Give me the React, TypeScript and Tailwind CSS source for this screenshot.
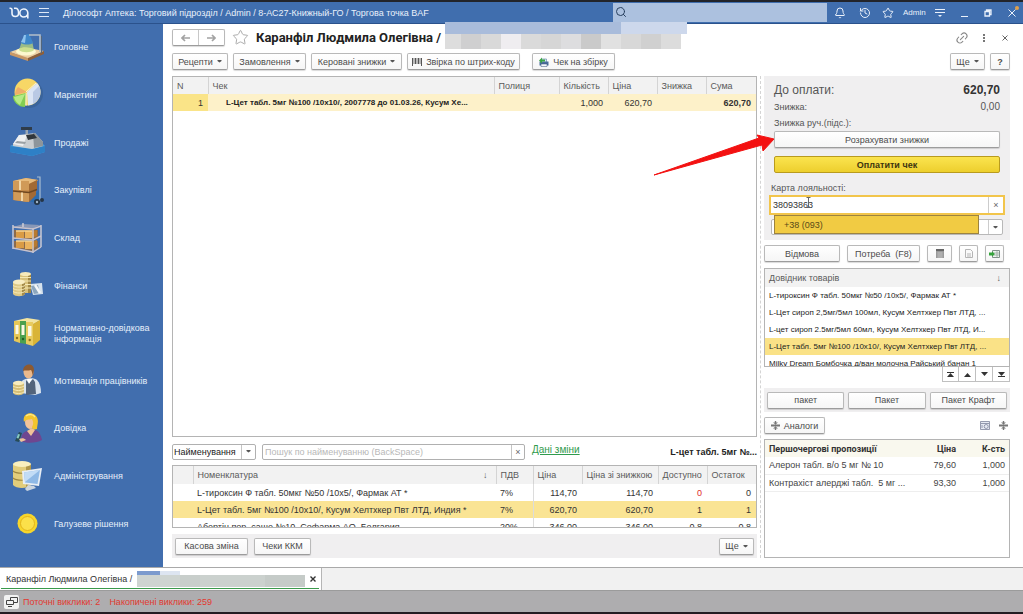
import React from "react";
import { Bell, History, Star, Search, Link2 } from "lucide-react";

const BTN =
  "flex items-center justify-center gap-1 h-[17px] rounded-[2px] border border-[#b9b9b9] border-b-[#9c9c9c] bg-linear-to-b from-white to-[#f6f6f6] shadow-[0_1px_1px_rgba(0,0,0,0.15)] text-[#4c4c4c] whitespace-nowrap";

const ROBOTO = "font-['Roboto','Liberation_Sans',sans-serif]";

function Btn({ className = "", children, label }: { className?: string; children: React.ReactNode; label?: string }) {
  return (
    <button type="button" aria-label={label} className={`${BTN} ${className}`}>
      {children}
    </button>
  );
}

function Caret() {
  return (
    <svg viewBox="0 0 5 3" className="w-[5px] h-[3px] shrink-0" fill="#555">
      <path d="M.5 0h4v1l-2 1.500-2-1.500z" />
    </svg>
  );
}

function Logo() {
  return (
    <svg viewBox="0 0 20 12" className="w-5 h-3" fill="none" stroke="#eef4fc" strokeWidth="1.600">
      <path d="M.5 1.200h.8C2.600 1.200 3 2 3 3v3.200a3.300 3.300 0 1 0 6.600 0C9.600 3 8.500 1.200 6.500 1.200H5" />
      <path d="M18.800 11.500V5.800a4 4 0 1 0-4 4.200c2 0 3.300-1 4-2.800" />
    </svg>
  );
}

const icons: Record<string, React.ReactNode> = {
  lamp: (
    <>
      <path d="M1 21 15 16l20 4-16 8z" fill="#ecd0a4" />
      <path d="M1 21v3l18 6v-3z" fill="#c99865" />
      <path d="m35 20-16 7v3l16-7z" fill="#8c5f3a" />
      <ellipse cx="17" cy="20.500" rx="10" ry="4" fill="#fdf8cf" />
      <path d="m13 10-3 9c3 3 12 3 15 0l-2-9z" fill="#b9d77a" opacity=".75" />
      <path d="m15 4 5-1 2 4 2 5c-3 2-9 2-12 0l2-5z" fill="#3f87c9" />
      <path d="m15 4 2 0-1 8-4-1 2-4z" fill="#8fc3ee" />
      <path d="M20 4h11v17" fill="none" stroke="#b3bfca" strokeWidth="1.600" />
      <path d="M32.500 5v17" stroke="#53667c" />
    </>
  ),
  pie: (
    <>
      <ellipse cx="20" cy="16" rx="14" ry="14" fill="#345987" opacity=".5" />
      <ellipse cx="18.500" cy="14" rx="13" ry="13.500" fill="#f7d766" />
      <path d="M18 14 28 5c7 8 2 21-9 22.500z" fill="#dbe5f4" />
      <path d="m24 14 6-6c4 7 0 15-6 18z" fill="#b9c9e4" />
      <path d="m18 14-12 3c0-3 1-6 3-8z" fill="#efae68" />
      <path d="M17 15 4 18c0 6 5 11 12 11z" fill="#83ce52" />
      <path d="m16 16-11 3c1 4 3 6 6 8z" fill="#b5ea86" />
      <path d="m17 14 10-9M17 15v13" stroke="#fff" strokeWidth=".7" />
    </>
  ),
  register: (
    <>
      <path d="M12 1h11v3H12z" fill="#2f3c4a" />
      <path d="M16.500 4h2.500v7h-2.500z" fill="#9aa7b4" />
      <path d="m1 20 7-3h25l3 3v6l-13 4-22-4z" fill="#4aa0e0" />
      <path d="m1 20 22 3 13-3v6l-13 4-22-4z" fill="#2e80c6" />
      <path d="m4 18 6-9 16-2 8 9v4l-11 3-19-3z" fill="#c9cdd0" />
      <path d="m4 18 6-9 8 0-4 11z" fill="#eef0f1" />
      <path d="m24 7 2 0 8 9v4l-9 2z" fill="#8d959b" />
      <path d="m17 9 8-1 3 4-9 2z" fill="#30363b" />
      <path d="m8 15 9 1-1 2-10-1z" fill="#9ba1a5" />
    </>
  ),
  boxes: (
    <>
      <path d="M20 27 30 16l1 12-4 1z" fill="#2d6cae" />
      <path d="m4 7 13-3 12 2-3 4v11l-8 7-14-2z" fill="#c48a4a" />
      <path d="m4 7 13-3 12 2-9 4z" fill="#e7bb7c" />
      <path d="M4 7h16v9l-16 0zM5 18l15 1v9L5 26z" fill="#d09a58" />
      <path d="m20 10 8-4v9l-8 3zM20 19l7-3v5l-7 7z" fill="#a26a34" />
      <path d="M4 17l16 1.500 8-3" stroke="#6f4720" fill="none" strokeWidth="1.400" />
      <path d="M11 6.500v9.500M13 18.500V27" stroke="#f2d6a6" strokeWidth="2" />
      <path d="M28 3h3v24" stroke="#a7bcd0" fill="none" strokeWidth="1.200" />
      <circle cx="28" cy="28" r="3" fill="#243547" />
      <circle cx="28" cy="28" r="1.200" fill="#9fb3c6" />
      <circle cx="33" cy="26" r="2" fill="#243547" />
    </>
  ),
  shelf: (
    <>
      <path d="m4 6 19 2 8-4-17-1z" fill="#b7b3bb" opacity=".6" />
      <path d="M5 9h24v8l-6 2-18-2zM5 20h24v8l-6 2-18-3z" fill="#8b6b4c" />
      <path d="M7 10h8v7H7zM7 20h8v7H7z" fill="#d99b45" />
      <path d="M16 10h7v7h-7zM16 20h7v8h-7z" fill="#eab35e" />
      <path d="m23 10 5-1v6l-5 2zM23 20l5-1v6l-5 3z" fill="#b87a30" />
      <path d="M7 10h16M7 20h16" stroke="#f5d393" strokeWidth="1.500" />
      <path d="M4 4v24M24 7v25M32 4v22M14 2v4" stroke="#d3d0d8" strokeWidth="1.400" fill="none" />
      <path d="m4 6 20 2 8-3M4 17l20 2 8-4M4 27l20 4 8-5" stroke="#c8c2cc" strokeWidth="1.400" fill="none" />
    </>
  ),
  coins: (
    <>
      <path d="m21 15 12-1 1 11-10 1z" fill="#d6e2ed" />
      <path d="m22 17 7-1 2 8-6 1z" fill="#8ca6bd" />
      <path d="m26 16 5 8" stroke="#f4f7f9" strokeWidth="2.500" />
      <path d="M11 5h11v19H11z" fill="#d8c17a" />
      <path d="M19 5h3v19h-3z" fill="#a18745" />
      <path d="M11 8.500h11M11 12h11M11 15.500h11M11 19h11" stroke="#f5e8b4" />
      <ellipse cx="16.500" cy="5" rx="5.500" ry="2" fill="#f7eabb" />
      <path d="M4 13h12v12c-2 3-10 3-12 0z" fill="#dfca86" />
      <path d="M13 13h3v12l-3 2z" fill="#a58b49" />
      <path d="M4 16.500c3 2 9 2 12 0M4 19.500c3 2 9 2 12 0M4 22.500c3 2 9 2 12 0" stroke="#f7ebba" fill="none" />
      <ellipse cx="10" cy="13" rx="6" ry="2.500" fill="#f8edc2" />
    </>
  ),
  binders: (
    <>
      <path d="m5 4 13-3 13 2-6 4z" fill="#f2e4a0" />
      <path d="m24 7 7-4v20l-7 6z" fill="#d9b437" />
      <path d="M5 4h6v22l-6-2z" fill="#e7c857" />
      <path d="M11 4h6v23l-6-1z" fill="#4ca04e" />
      <path d="M17 5h7v24l-7-2z" fill="#e8cb5e" />
      <path d="M6.500 8h3v9h-3zM12.500 8h3v10h-3zM19 9h3.500v10H19z" fill="#fbf8e4" />
      <circle cx="8" cy="21" r="1.200" fill="#8c7220" />
      <circle cx="14" cy="22" r="1.200" fill="#225f26" />
      <circle cx="20.700" cy="23" r="1.200" fill="#8c7220" />
    </>
  ),
  worker: (
    <>
      <path d="M13 17c2-3 12-4 15-1 3 3 4 8 4 13l-6 2-14-2z" fill="#d9e3ee" />
      <path d="m17 16 3 3 4-4 2 3 1 12-10 1z" fill="#53647b" />
      <path d="m18 15 2 5 3-5z" fill="#fff" />
      <ellipse cx="19.500" cy="8" rx="5" ry="6.500" fill="#eab98c" />
      <path d="M14 7c0-8 11-9 11-1l-1 6c-1-3-1-5-2-6-3 1-6 0-8 1z" fill="#8d5a31" />
      <path d="M4 19h11v10c-2 3-9 3-11 0z" fill="#d5be76" />
      <path d="M4 22c3 2 8 2 11 0M4 25c3 2 8 2 11 0M4 28c3 2 8 2 11 0" stroke="#f7eab5" fill="none" />
      <ellipse cx="9.500" cy="19" rx="5.500" ry="2.200" fill="#f8ecbe" />
    </>
  ),
  woman: (
    <>
      <path d="M12 29c0-6 2-9 6-10l8-1c4 1 6 5 7 10-5 3-15 4-21 1z" fill="#6e4690" />
      <path d="m18 19 4 5 4-6-3-2z" fill="#f0c298" />
      <ellipse cx="21" cy="10" rx="5" ry="7" fill="#f2c49a" />
      <path d="M15 10C13 2 21-1 26 3c5 4 2 10 2 14-3 1-5 0-5-2 2-3 1-6 0-8-3 1-6 0-8 3z" fill="#f3c52d" />
      <path d="M17 4c3-2 7-2 9 1" stroke="#ffe883" fill="none" strokeWidth="1.500" />
      <path d="m6 29 4-9 3 1-3 9z" fill="#274c57" />
      <path d="m9 22 2 .5-1.500 4-2-.5z" fill="#86c9c3" />
      <path d="M10 27c3-1 5-1 7 1l-5 2z" fill="#f0c298" />
    </>
  ),
  database: (
    <>
      <path d="M4 4v21c3 4 15 4 18 0V4z" fill="#e2cd7b" />
      <path d="M17 4h5v21l-5 2z" fill="#b0974a" />
      <path d="M4 11c3 3 15 3 18 0M4 18c3 3 15 3 18 0" stroke="#9e8741" fill="none" strokeWidth="1.200" />
      <ellipse cx="13" cy="4" rx="9" ry="3" fill="#f9efbe" />
      <path d="m13 11 20-3-3 18-16-2z" fill="#e8eef5" />
      <path d="m15 12.500 16-2.500-2.500 14-12.500-1.500z" fill="#8fb9e6" />
      <path d="m15 12.500 16-2.500-15 12z" fill="#c2dcf6" />
      <path d="m19 25 6 1 2 2-9 3-2-2z" fill="#ccd5df" />
    </>
  ),
  coin: (
    <>
      <circle cx="18.500" cy="16.500" r="10" fill="#f7d62b" />
      <circle cx="18.500" cy="16.500" r="7" fill="#fbe04a" stroke="#e2b41b" strokeWidth="1" />
    </>
  ),
};

const menu: [string, string][] = [
  ["lamp", "Головне"],
  ["pie", "Маркетинг"],
  ["register", "Продажі"],
  ["boxes", "Закупівлі"],
  ["shelf", "Склад"],
  ["coins", "Фінанси"],
  ["binders", "Нормативно-довідкова інформація"],
  ["worker", "Мотивація працівників"],
  ["woman", "Довідка"],
  ["database", "Адміністрування"],
  ["coin", "Галузеве рішення"],
];

function Header() {
  return (
    <header className="flex items-center h-[22px] bg-[#406eae] border-b border-[#2b528c] text-[#eaf1fb] pl-[9px]">
      <Logo />
      <button type="button" aria-label="Меню" className="ml-[10px] flex flex-col gap-[3px]">
        <span className="block w-[10px] h-px bg-[#dfe9f7]" />
        <span className="block w-[10px] h-px bg-[#dfe9f7]" />
        <span className="block w-[10px] h-px bg-[#dfe9f7]" />
      </button>
      <h1 className="ml-[14px] text-[9px] whitespace-nowrap">
        Ділософт Аптека: Торговий підрозділ / Admin / 8-АС27-Книжный-ГО / Торгова точка BAF
      </h1>
      <label className="ml-auto flex items-center w-[214px] h-[19px] bg-[#acc1df] pl-[2px] mb-px">
        <Search className="w-3 h-3 text-[#28405f]" strokeWidth={2} />
        <input aria-label="Пошук" className="flex-1 min-w-0 bg-transparent outline-none text-[9px] text-[#222]" />
      </label>
      <div className="flex items-center pl-[7px] w-[196px] shrink-0">
        <button type="button" aria-label="Сповіщення"><Bell className="w-3 h-3" strokeWidth={2} /></button>
        <button type="button" aria-label="Історія" className="ml-[13px]"><History className="w-3 h-3" strokeWidth={2} /></button>
        <button type="button" aria-label="Вибране" className="ml-[11px]"><Star className="w-3 h-3" strokeWidth={2} /></button>
        <a href="#admin" className="ml-[9px] text-[8px]">Admin</a>
        <button type="button" aria-label="Налаштування" className="ml-[9px]">
          <svg viewBox="0 0 10 10" className="w-[10px] h-[10px]" stroke="#eaf1fb" fill="#eaf1fb">
            <path d="M0 1.500h10M0 4.500h10" />
            <path d="M3 7h4L5 9z" stroke="none" />
          </svg>
        </button>
        <button type="button" aria-label="Згорнути" className="ml-4 mt-[7px] w-[7px] h-px bg-[#eaf1fb]" />
        <button type="button" aria-label="Відновити" className="ml-4">
          <svg viewBox="0 0 8 8" className="w-2 h-2" stroke="#eaf1fb" fill="none">
            <path d="M1 2.500h4.500V7H1zM2.500 2.500V1H7v4.500H5.500" strokeWidth="1.300" />
          </svg>
        </button>
        <button type="button" aria-label="Закрити" className="relative ml-4">
          <svg viewBox="0 0 8 8" className="w-2 h-2" stroke="#eaf1fb">
            <path d="m.5.5 7 7M7.500.5l-7 7" />
          </svg>
          <span className="absolute -top-[3px] -right-[3px] w-1 h-1 rounded-full bg-[#e0a04c]" />
        </button>
      </div>
    </header>
  );
}

function Sidebar() {
  return (
    <nav className="w-[163px] shrink-0 bg-[#416eae] pb-[19px] flex flex-col">
      {menu.map(([icon, label]) => (
        <a key={icon} href={`#${icon}`} className="flex-1 flex items-center gap-[9px] pl-[9px] pr-[6px] min-h-[40px]">
          <svg viewBox="0 0 36 34" className="w-9 h-[34px] shrink-0">
            {icons[icon]}
          </svg>
          <span className="text-[9px] leading-[11px] text-[#e6eefa]">{label}</span>
        </a>
      ))}
    </nav>
  );
}

const blocks = ["bg-[#cfcfd0]", "bg-[#d9d9d9]", "bg-[#efedf0]", "bg-[#dadada]", "bg-[#d6d6d6]", "bg-[#dddddf]", "bg-[#cacaca]", "bg-[#e1e1e1]", "bg-[#d8d8d8]", "bg-[#d0d0d0]", "bg-[#dcdcdc]"];

function TitleRow() {
  return (
    <div className="flex items-center h-[19px] mt-[4px] pr-[15px]">
      <div className="flex w-[53px] h-[17px] rounded-[2px] border border-[#b9b9b9] border-b-[#9c9c9c] shadow-[0_1px_1px_rgba(0,0,0,0.15)]">
        {["M9 4H1M4 1 1 4l3 3", "M0 4h8M5 1l3 3-3 3"].map((d, i) => (
          <button
            key={d}
            type="button"
            aria-label={i ? "Вперед" : "Назад"}
            className="flex-1 flex items-center justify-center first:border-r border-[#c8c8c8]"
          >
            <svg viewBox="0 0 9 8" className="w-[9px] h-2" fill="none" stroke="#a3a3a3" strokeWidth="1.700">
              <path d={d} />
            </svg>
          </button>
        ))}
      </div>
      <button type="button" aria-label="Додати до вибраного" className="ml-[7px]">
        <Star className="w-[17px] h-[17px] text-[#a5a5a5]" strokeWidth={1.3} />
      </button>
      <div className="relative ml-[7px]">
        <h2 className={`${ROBOTO} text-[13px] font-bold leading-[19px] text-[#222] whitespace-nowrap`}>Каранфіл Людмила Олегівна /</h2>
        <div className="absolute left-full -top-[6px] ml-1 w-[242px]">
          <div className="flex h-3">
            <div className="w-[176px] bg-[#a9bcdb]" />
            <div className="flex-1 bg-[#cdd8ec]" />
          </div>
          <div className="flex h-[15px]">
            <div className="w-4 bg-[#dddddd]" />
            {blocks.map((c) => (
              <div key={c} className={`w-5 ${c}`} />
            ))}
          </div>
        </div>
      </div>
      <div className="ml-auto flex items-center text-[#888]">
        <button type="button" aria-label="Посилання">
          <Link2 className="w-[14px] h-[14px] -rotate-45" strokeWidth={1.8} />
        </button>
        <button type="button" aria-label="Дії" className="ml-[14px] flex flex-col gap-px">
          <span className="block w-[2px] h-[2px] bg-[#777]" />
          <span className="block w-[2px] h-[2px] bg-[#777]" />
          <span className="block w-[2px] h-[2px] bg-[#777]" />
        </button>
        <button type="button" aria-label="Закрити форму" className="ml-[17px]">
          <svg viewBox="0 0 6 6" className="w-[6px] h-[6px]" stroke="#666">
            <path d="m.5.5 5 5M5.500.5l-5 5" />
          </svg>
        </button>
      </div>
    </div>
  );
}

function Toolbar() {
  return (
    <div className="flex items-center mt-[6px] pr-[13px] gap-[5px]">
      <Btn className="w-[56px]">Рецепти <Caret /></Btn>
      <Btn className="w-[73px]">Замовлення <Caret /></Btn>
      <Btn className="w-[91px]">Керовані знижки <Caret /></Btn>
      <Btn className="w-[113px]">
        <svg viewBox="0 0 10 8" className="w-[10px] h-2" stroke="#555">
          <path d="M.5 0v8M3.500 0v6M6.500 0v6M9.500 0v8" />
          <path d="M2 0v6M5 0v6M8 0v6" strokeWidth=".8" />
        </svg>
        Звірка по штрих-коду
      </Btn>
      <Btn className="w-[83px] ml-[7px]">
        <svg viewBox="0 0 10 10" className="w-[10px] h-[10px]">
          <path d="M2.500 2h5v4h-5z" fill="#dce9f7" stroke="#5d7da6" strokeWidth=".6" />
          <path d="M.5 4.500h9v4h-9z" fill="#4b6c9b" />
          <path d="M2 7h6v2.500H2z" fill="#f4f7fb" stroke="#38527a" strokeWidth=".5" />
          <path d="M0 3.500 3 .5v2h3v2H3v2z" fill="#3ba545" />
        </svg>
        Чек на збірку
      </Btn>
      <Btn className="w-[35px] ml-auto">Ще <Caret /></Btn>
      <Btn className="w-[20px] font-bold">?</Btn>
    </div>
  );
}

function ReceiptTable() {
  const th = "h-[17px] px-1 font-normal text-left border-r border-[#d4d4d4] last:border-r-0";
  const td = "h-[17px] px-[5px] text-right whitespace-nowrap";
  return (
    <div className="flex-1 min-h-[200px] border border-[#b4b4b4]">
      <table className="w-full table-fixed border-collapse">
        <colgroup>
          <col className="w-[35px]" /><col /><col className="w-[65px]" /><col className="w-[49px]" />
          <col className="w-[49px]" /><col className="w-[49px]" /><col className="w-[50px]" />
        </colgroup>
        <thead className="bg-[#f2f2f2] text-[#5a5a5a]">
          <tr>
            {["N", "Чек", "Полиця", "Кількість", "Ціна", "Знижка", "Сума"].map((h) => (
              <th key={h} className={th}>{h}</th>
            ))}
          </tr>
        </thead>
        <tbody>
          <tr className="bg-[#fdf1c9] text-[#333]">
            <td className={`${td} bg-[#fae488]`}>1</td>
            <td className="pl-[18px] text-[8px] font-bold whitespace-nowrap text-[#222]">L-Цет табл. 5мг №100 /10x10/, 2007778 до 01.03.26, Кусум Хе...</td>
            <td className={td} />
            <td className={td}>1,000</td>
            <td className={td}>620,70</td>
            <td className={td} />
            <td className={`${td} font-bold`}>620,70</td>
          </tr>
        </tbody>
      </table>
    </div>
  );
}

function SearchRow() {
  return (
    <div className="flex items-center mt-[6px] h-[17px]">
      <div className="relative w-[84px] h-4 shrink-0 rounded-[2px] border border-[#b0b0b0] flex bg-white">
        <select aria-label="Поле пошуку" className="w-full appearance-none bg-transparent pl-[1px] text-[#222] outline-none">
          <option>Найменування</option>
        </select>
        <span className="pointer-events-none absolute right-0 inset-y-0 w-[14px] border-l border-[#c4c4c4] flex items-center justify-center"><Caret /></span>
      </div>
      <div className="ml-[6px] w-[263px] h-4 rounded-[2px] border border-[#b0b0b0] flex">
        <input aria-label="Пошук по найменуванню" placeholder="Пошук по найменуванню (BackSpace)" className="flex-1 min-w-0 px-[2px] outline-none placeholder:text-[#b8b8b8]" />
        <button type="button" aria-label="Очистити" className="w-[13px] border-l border-[#c4c4c4] flex items-center justify-center text-[#666]">×</button>
      </div>
      <a href="#shift" className="ml-[7px] mb-[3px] text-[10px] text-[#2f9b4d] underline">Дані зміни</a>
      <span className="ml-auto font-bold text-[#222] whitespace-nowrap">L-цет табл. 5мг №...</span>
    </div>
  );
}

const stock = [
  ["L-тироксин Ф табл. 50мкг №50 /10x5/, Фармак АТ *", "7%", "114,70", "114,70", "0", "0"],
  ["L-Цет табл. 5мг №100 /10x10/, Кусум Хелтхкер Пвт ЛТД, Индия *", "7%", "620,70", "620,70", "1", "1"],
  ["Абертін пор. саше №10, Софарма АО, Болгария", "20%", "346,00", "346,00", "0,8", "0,8"],
];

function StockTable() {
  const th = "h-[18px] px-1 font-normal text-left border-r border-[#d4d4d4] last:border-r-0 whitespace-nowrap";
  const td = "h-[17px] px-[5px] text-right";
  return (
    <div className="mt-[5px] h-[63px] overflow-hidden border border-[#b4b4b4]">
      <table className="w-full table-fixed border-collapse">
        <colgroup>
          <col className="w-[20px]" /><col /><col className="w-[37px]" /><col className="w-[49px]" />
          <col className="w-[76px]" /><col className="w-[49px]" /><col className="w-[49px]" />
        </colgroup>
        <thead className="bg-[#f2f2f2] text-[#5a5a5a]">
          <tr>
            <th className={th} aria-label="Позначка" />
            <th className={th}>
              <span className="flex justify-between pr-1">Номенклатура <span>↓</span></span>
            </th>
            {["ПДВ", "Ціна", "Ціна зі знижкою", "Доступно", "Остаток"].map((h) => (
              <th key={h} className={th}>{h}</th>
            ))}
          </tr>
        </thead>
        <tbody className="text-[#333]">
          {stock.map((r, i) => (
            <tr key={r[0]} className={i === 1 ? "bg-[#fae494]" : ""}>
              <td className={td} />
              <td className="px-1 whitespace-nowrap">{r[0]}</td>
              <td className="px-1 border-r border-[#dcdcdc]">{r[1]}</td>
              <td className={td}>{r[2]}</td>
              <td className={td}>{r[3]}</td>
              <td className={`${td} ${i === 0 ? "text-[#e02b2b]" : ""}`}>{r[4]}</td>
              <td className={td}>{r[5]}</td>
            </tr>
          ))}
        </tbody>
      </table>
    </div>
  );
}

function PayPanel() {
  return (
    <section className="bg-[#f0eff0] h-[164px] pt-[5px] px-[5px] text-[#555]">
      <div className="px-[5px]">
        <div className="flex justify-between items-center h-[18px]">
          <span className="text-[12px]">До оплати:</span>
          <span className="text-[12px] font-bold text-[#333]">620,70</span>
        </div>
        <div className="flex justify-between items-center h-4">
          <span>Знижка:</span>
          <span className="text-[10px]">0,00</span>
        </div>
        <div className="flex items-center h-4">Знижка руч.(підс.):</div>
        <Btn className="w-full">Розрахувати знижки</Btn>
        <button type="button" className="mt-[8px] w-full h-[17px] rounded-[2px] border border-[#b99b1e] bg-linear-to-b from-[#fbe44e] to-[#edcf2c] font-bold text-[#3d3510]">
          Оплатити чек
        </button>
      </div>
      <label htmlFor="loyalty" className="block mt-[9px] pl-[2px] leading-[13px]">Карта лояльності:</label>
      <div className="relative">
        <div className="flex h-[20px] border-2 border-[#f2c54b] bg-white">
          <input id="loyalty" defaultValue="38093863" className="flex-1 min-w-0 px-[2px] outline-none text-[#333]" />
          <button type="button" aria-label="Очистити карту" className="w-[15px] border-l border-[#ccc] text-[#666]">×</button>
        </div>
        <svg viewBox="0 0 5 11" className="absolute left-[37px] top-[2px] w-[5px] h-[11px]" stroke="#666" fill="none">
          <path d="M.5.5h4M2.500.5v10M.5 10.500h4" />
        </svg>
        <div className="flex h-4 mt-[4px] ml-[2px] mr-[2px] rounded-[2px] border border-[#b8b8b8] bg-white">
          <button type="button" aria-label="Відкрити список" className="ml-auto w-[14px] border-l border-[#ccc] flex items-center justify-center"><Caret /></button>
        </div>
        <button type="button" className="absolute left-[5px] right-[26px] top-[20px] h-[19px] border border-[#9c8340] bg-[#f1cb43] pl-[9px] text-left text-[#5a4a18]">
          +38 (093)
        </button>
      </div>
    </section>
  );
}

const goods = [
  "L-тироксин Ф табл. 50мкг №50 /10x5/, Фармак АТ *",
  "L-Цет сироп 2,5мг/5мл 100мл, Кусум Хелтхкер Пвт ЛТД, ...",
  "L-цет сироп 2.5мг/5мл 60мл, Кусум Хелтхкер Пвт ЛТД, И...",
  "L-Цет табл. 5мг №100 /10x10/, Кусум Хелтхкер Пвт ЛТД, ...",
  "Milky Dream Бомбочка д/ван молочна Райський банан 1",
];

const scrollers: [string, string][] = [
  ["На початок", "M0 0h7v1H0zM3.500 1 7 5H0z"],
  ["Вгору", "M3.500 1 7 5H0z"],
  ["Вниз", "M0 0h7L3.500 4z"],
  ["На кінець", "M0 0h7L3.500 4zM0 4h7v1H0z"],
];

function GoodsList() {
  return (
    <section className="mt-[6px]">
      <div className="h-[99px] border border-[#b4b4b4] overflow-hidden">
        <table className="w-full table-fixed border-collapse">
          <thead className="bg-[#f2f2f2] text-[#5a5a5a]">
            <tr>
              <th className="h-[18px] px-1 font-normal">
                <span className="flex justify-between pr-1">Довідник товарів <span>↓</span></span>
              </th>
            </tr>
          </thead>
          <tbody className="text-[8px] text-[#222]">
            {goods.map((g, i) => (
              <tr key={g} className={i === 3 ? "bg-[#fae287]" : ""}>
                <td className="h-[17px] pl-1 whitespace-nowrap">{g}</td>
              </tr>
            ))}
          </tbody>
        </table>
      </div>
      <div className="flex justify-end h-[15px]">
        {scrollers.map(([name, d]) => (
          <button key={name} type="button" aria-label={name} className="w-[17px] border border-t-0 border-l-0 first:border-l border-[#c0c0c0] flex items-center justify-center">
            <svg viewBox="0 0 7 5" className="w-[7px] h-[5px]" fill="#333"><path d={d} /></svg>
          </button>
        ))}
      </div>
    </section>
  );
}

function SplitIcon() {
  return (
    <svg viewBox="0 0 9 9" className="w-[9px] h-[9px]" fill="#777">
      <path d="M3.800 0h1.400v1.500h1.800L4.500 3.500 2 1.500h1.800zM3.800 9h1.400V7.500H7L4.500 5.500 2 7.500h1.800zM0 3.500h9v2H0z" />
    </svg>
  );
}

function Offers() {
  const th = "h-[17px] px-1 font-bold whitespace-nowrap";
  const td = "h-[17px] px-1 whitespace-nowrap border-b border-[#eeeeee]";
  return (
    <div className="mt-[5px] flex-1 border border-[#b4b4b4]">
      <table className="w-full table-fixed border-collapse text-[#444]">
        <colgroup><col /><col className="w-[50px]" /><col className="w-[49px]" /></colgroup>
        <thead className={`${ROBOTO} bg-[#f9f8ee] text-[#333]`}>
          <tr>
            <th className={`${th} text-left`}>Першочергові пропозиції</th>
            <th className={`${th} text-right`}>Ціна</th>
            <th className={`${th} text-right`}>К-сть</th>
          </tr>
        </thead>
        <tbody>
          {[["Алерон табл. в/о 5 мг № 10", "79,60"], ["Контрахіст алерджі табл.  5 мг ...", "93,30"]].map(([n, p]) => (
            <tr key={n}>
              <td className={`${td} whitespace-pre`}>{n}</td>
              <td className={`${td} text-right`}>{p}</td>
              <td className={`${td} text-right`}>1,000</td>
            </tr>
          ))}
        </tbody>
      </table>
    </div>
  );
}

function RightColumn() {
  return (
    <aside className="w-[246px] shrink-0 flex flex-col">
      <PayPanel />
      <div className="flex justify-between mt-[5px] pr-[6px]">
        <Btn className="w-[76px]">Відмова</Btn>
        <Btn className="w-[73px]">Потреба&nbsp; (F8)</Btn>
        <Btn className="w-[25px]" label="Калькулятор">
          <svg viewBox="0 0 8 9" className="w-2 h-[9px]"><path d="M0 0h8v9H0z" fill="#9a9a9a" /><path d="M0 0h8v2H0z" fill="#666" /><path d="M1 4h6M1 6h6M1 8h6M3 3v6M5 3v6" stroke="#c9c9c9" strokeWidth=".5" /></svg>
        </Btn>
        <Btn className="w-[19px]" label="Документ">
          <svg viewBox="0 0 8 9" className="w-2 h-[9px]" fill="#fafafa" stroke="#b5b5b5"><path d="M.5.5h5l2 2v6h-7z" /><path d="M2 5h4M2 7h4" /></svg>
        </Btn>
        <Btn className="w-[19px]" label="Додати в таблицю">
          <svg viewBox="0 0 11 8" className="w-[11px] h-2"><path d="M3.500.5h7v7h-7z" fill="#eef6ee" stroke="#82918a" /><path d="M4 3h6M4 5h6M8 1v6" stroke="#82918a" strokeWidth=".6" /><path d="M0 2.500h3v-1L6 4 3 6.500v-1H0z" fill="#34a33b" /></svg>
        </Btn>
      </div>
      <GoodsList />
      <div className="mt-[6px] h-[24px] bg-[#f0eff0] flex items-center gap-1 px-[3px]">
        <Btn className="flex-1">пакет</Btn>
        <Btn className="flex-1">Пакет</Btn>
        <Btn className="flex-1">Пакет Крафт</Btn>
      </div>
      <div className="flex items-center mt-[5px]">
        <Btn className="w-[61px]"><SplitIcon /> Аналоги</Btn>
        <button type="button" aria-label="Знімок" className="ml-auto">
          <svg viewBox="0 0 10 9" className="w-[10px] h-[9px]" fill="#e6e9f3" stroke="#7d849c" strokeWidth=".8"><path d="M.5.5h9v8h-9z" /><path d="M1 2.500h8M2 4v3" /><circle cx="6.200" cy="5.500" r="2" /></svg>
        </button>
        <button type="button" aria-label="Розгорнути" className="ml-[9px] mr-[2px]"><SplitIcon /></button>
      </div>
      <Offers />
    </aside>
  );
}

function Footer() {
  return (
    <footer>
      <div className="flex h-[23px] border-t border-[#a9a9a9] bg-[#f1f1f1]">
        <div className="flex items-center w-[322px] bg-white border-r border-[#b5b5b5] pl-[1px] pr-[2px]">
          <div className="flex items-center w-full h-[20px] border-b border-[#3a9a4c] pl-[5px] text-[#333]">
            <span className="whitespace-nowrap">Каранфіл Людмила Олегівна /</span>
            <div className="ml-[5px] flex-1 h-4 flex flex-col">
              <div className="flex h-1"><div className="w-[23px] bg-[#7c9bce]" /><div className="w-5 bg-[#dde5f1]" /></div>
              <div className="flex flex-1">
                <div className="w-[43px] bg-[#ced4d1]" /><div className="w-5 bg-[#c8cecb]" /><div className="flex-1 bg-[#cbd1ce]" /><div className="w-10 bg-[#c5cbc8]" />
              </div>
            </div>
            <button type="button" aria-label="Закрити вкладку" className="ml-[5px] mr-[3px]">
              <svg viewBox="0 0 6 6" className="w-[6px] h-[6px]" stroke="#333" strokeWidth="1.400"><path d="m.5.5 5 5M5.500.5l-5 5" /></svg>
            </button>
          </div>
        </div>
      </div>
      <div className="flex items-center h-[22px] bg-[#aeadaf] border-t border-[#9b9b9b] pl-1 text-[#e2382f] whitespace-nowrap">
        <button type="button" aria-label="Вікна" className="flex items-center justify-center w-[15px] h-[14px] bg-[#f2f2f2] rounded-[2px]">
          <svg viewBox="0 0 12 10" className="w-3 h-[10px]" fill="#f2f2f2" stroke="#444"><path d="M4.500.5h7v5h-7z" /><path d="M.5 3.500h7v4h-7zM2 9.500h4" /></svg>
        </button>
        <span className="ml-1">Поточні виклики: 2</span>
        <span className="ml-[9px]">Накопичені виклики: 259</span>
      </div>
      <div className="h-[2px] bg-[#241c22]" />
    </footer>
  );
}

export default function App() {
  return (
    <div className="relative min-h-screen flex flex-col bg-white text-[9px] leading-[12px] font-['Liberation_Sans',Arial,sans-serif]">
      <div className="h-[2px] bg-[#22242a]" />
      <Header />
      <div className="flex-1 flex">
        <Sidebar />
        <main className="flex-1 min-w-0 flex flex-col pl-[9px] pb-[9px]">
          <TitleRow />
          <Toolbar />
          <div className="relative flex-1 flex mt-[6px] pr-[13px]">
            <div className="flex-1 min-w-0 flex flex-col">
              <ReceiptTable />
              <SearchRow />
              <StockTable />
              <div className="mt-[6px] h-[24px] bg-[#f0eff0] flex items-center gap-[6px] px-[3px]">
                <Btn className="w-[73px]">Касова зміна</Btn>
                <Btn className="w-[57px]">Чеки ККМ</Btn>
                <Btn className="w-[35px] ml-auto">Ще <Caret /></Btn>
              </div>
            </div>
            <div className="w-[7px] flex justify-center"><div className="border-l border-dashed border-[#d4d4d4]" /></div>
            <RightColumn />
            <svg viewBox="0 0 124 44" className="absolute right-[247px] top-[57px] w-[124px] h-[44px] pointer-events-none" fill="#f31111" stroke="#f31111" strokeLinejoin="round">
              <path d="M2 42 107 5l-2-3 17 4-11 12-1-6z" />
            </svg>
          </div>
        </main>
      </div>
      <Footer />
    </div>
  );
}
